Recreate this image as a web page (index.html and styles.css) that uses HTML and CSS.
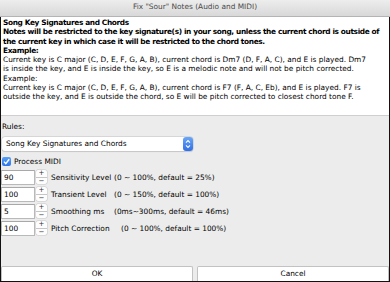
FILE: index.html
```html
<!DOCTYPE html>
<html>
<head>
<meta charset="utf-8">
<link rel="stylesheet" href="styles.css">
</head>
<body>
<div class="win">
  <div class="titlebar">Fix "Sour" Notes (Audio and MIDI)</div>
  <div class="content">
    <div class="desc">
      <div class="b">Song Key Signatures and Chords</div>
      <div class="b">Notes will be restricted to the key signature(s) in your song, unless the current chord is outside of<br>the current key in which case it will be restricted to the chord tones.</div>
      <div class="b">Example:</div>
      <div>Current key is C major (C, D, E, F, G, A, B), current chord is Dm7 (D, F, A, C), and E is played. Dm7<br>is inside the key, and E is inside the key, so E is a melodic note and will not be pitch corrected.</div>
      <div>Example:</div>
      <div>Current key is C major (C, D, E, F, G, A, B), current chord is F7 (F, A, C, Eb), and E is played. F7 is<br>outside the key, and E is outside the chord, so E will be pitch corrected to closest chord tone F.</div>
    </div>
    <div class="form">
      <div class="label">Rules:</div>
      <div class="select">
        <span class="sel-text">Song Key Signatures and Chords</span>
        <span class="sel-btn"><svg width="10" height="14" viewBox="0 0 10 14"><path d="M3 5.6 L5 3.6 L7 5.6 M3 8.4 L5 10.4 L7 8.4" fill="none" stroke="#fff" stroke-width="1.1"/></svg></span>
      </div>
      <div class="check"><span class="box"><svg width="9" height="9" viewBox="0 0 9 9"><path d="M2 4.6 L3.8 6.6 L7.2 2.2" fill="none" stroke="#fff" stroke-width="1.4"/></svg></span><span>Process MIDI</span></div>
      <div class="rows">
        <div class="row"><div class="num">90</div><div class="step"><span class="plus">+</span><span class="minus">−</span></div><span class="name">Sensitivity Level</span><span class="range">(0 ~ 100%, default = 25%)</span></div>
        <div class="row"><div class="num">100</div><div class="step"><span class="plus">+</span><span class="minus">−</span></div><span class="name">Transient Level</span><span class="range">(0 ~ 150%, default = 100%)</span></div>
        <div class="row"><div class="num">5</div><div class="step"><span class="plus">+</span><span class="minus">−</span></div><span class="name">Smoothing ms</span><span class="range">(0ms~300ms, default = 46ms)</span></div>
        <div class="row"><div class="num">100</div><div class="step"><span class="plus">+</span><span class="minus">−</span></div><span class="name wide">Pitch Correction</span><span class="range">(0 ~ 100%, default = 100%)</span></div>
      </div>
    </div>
    <div class="buttons">
      <div class="btn">OK</div>
      <div class="btn">Cancel</div>
    </div>
  </div>
</div>
</body>
</html>
```

FILE: styles.css
```css
html, body {
  margin: 0;
  padding: 0;
  width: 390px;
  height: 282px;
  overflow: hidden;
  background: #ececec;
}
.win {
  width: 390px;
  height: 282px;
  display: flex;
  flex-direction: column;
  font-family: "DejaVu Sans", sans-serif;
  font-size: 7.4px;
  color: #000;
}
.titlebar {
  height: 16px;
  line-height: 14px;
  border-bottom: 1px solid #b4b4b4;
  background: linear-gradient(#ededed, #d8d8d8);
  color: #4a4a4a;
  text-align: center;
  flex: none;
}
.content {
  flex: 1;
  display: flex;
  flex-direction: column;
  border: 1px solid #111;
  border-top: none;
  background: #ececec;
}
.desc {
  background: #fff;
  height: 97px;
  padding: 1px 0 0 2px;
  border-bottom: 1px solid #cfcfcf;
  line-height: 9.25px;
  white-space: nowrap;
  flex: none;
}
.b {
  font-weight: bold;
  letter-spacing: -0.36px;
}
.form {
  flex: 1;
  display: flex;
  flex-direction: column;
  padding: 6px 0 0 0;
}
.label {
  line-height: 10px;
  height: 10px;
  padding-left: 1px;
}
.select {
  margin: 5px 0 0 1px;
  width: 191px;
  height: 14px;
  display: flex;
  align-items: center;
  background: #fff;
  border-radius: 3px;
  box-shadow: 0 0 0 0.5px #c4c4c4, 0 0.5px 1px rgba(0,0,0,0.15);
}
.sel-text {
  flex: 1;
  padding-left: 4px;
  line-height: 14px;
}
.sel-btn {
  width: 10px;
  height: 14px;
  border-radius: 3px;
  background: linear-gradient(#6aa6f7, #2f6fe6);
  display: flex;
}
.check {
  margin: 5px 0 0 1px;
  height: 10px;
  display: flex;
  align-items: center;
  gap: 3px;
}
.box {
  width: 9px;
  height: 9px;
  border-radius: 2px;
  background: linear-gradient(#5aa0f6, #2b75ea);
  display: flex;
}
.rows {
  margin-top: 4px;
  display: flex;
  flex-direction: column;
  gap: 3px;
}
.row {
  height: 14px;
  display: flex;
  align-items: center;
  white-space: nowrap;
}
.num {
  width: 30px;
  height: 13px;
  line-height: 13px;
  padding-left: 2px;
  background: #fff;
  border: 0.5px solid #b9b9b9;
  border-top-color: #a8a8a8;
}
.step {
  margin-left: 1px;
  width: 11px;
  height: 14px;
  display: flex;
  flex-direction: column;
  background: #fdfdfd;
  border-radius: 2px;
  box-shadow: 0 0 0 0.5px #c6c6c6;
  color: #333;
}
.step span {
  height: 7px;
  line-height: 7px;
  text-align: center;
  font-size: 7px;
}
.plus {
  border-bottom: 0.5px solid #c6c6c6;
}
.name {
  margin-left: 4px;
  width: 63px;
  flex: none;
}
.name.wide {
  width: 70px;
}
.range {
  margin-left: 0;
}
.buttons {
  display: flex;
  gap: 4px;
  flex: none;
}
.btn {
  flex: 1;
  height: 14px;
  line-height: 14px;
  text-align: center;
  background: #fff;
  border: 0.5px solid #c2c2c2;
  border-bottom: none;
  border-radius: 2px 2px 0 0;
}
```
